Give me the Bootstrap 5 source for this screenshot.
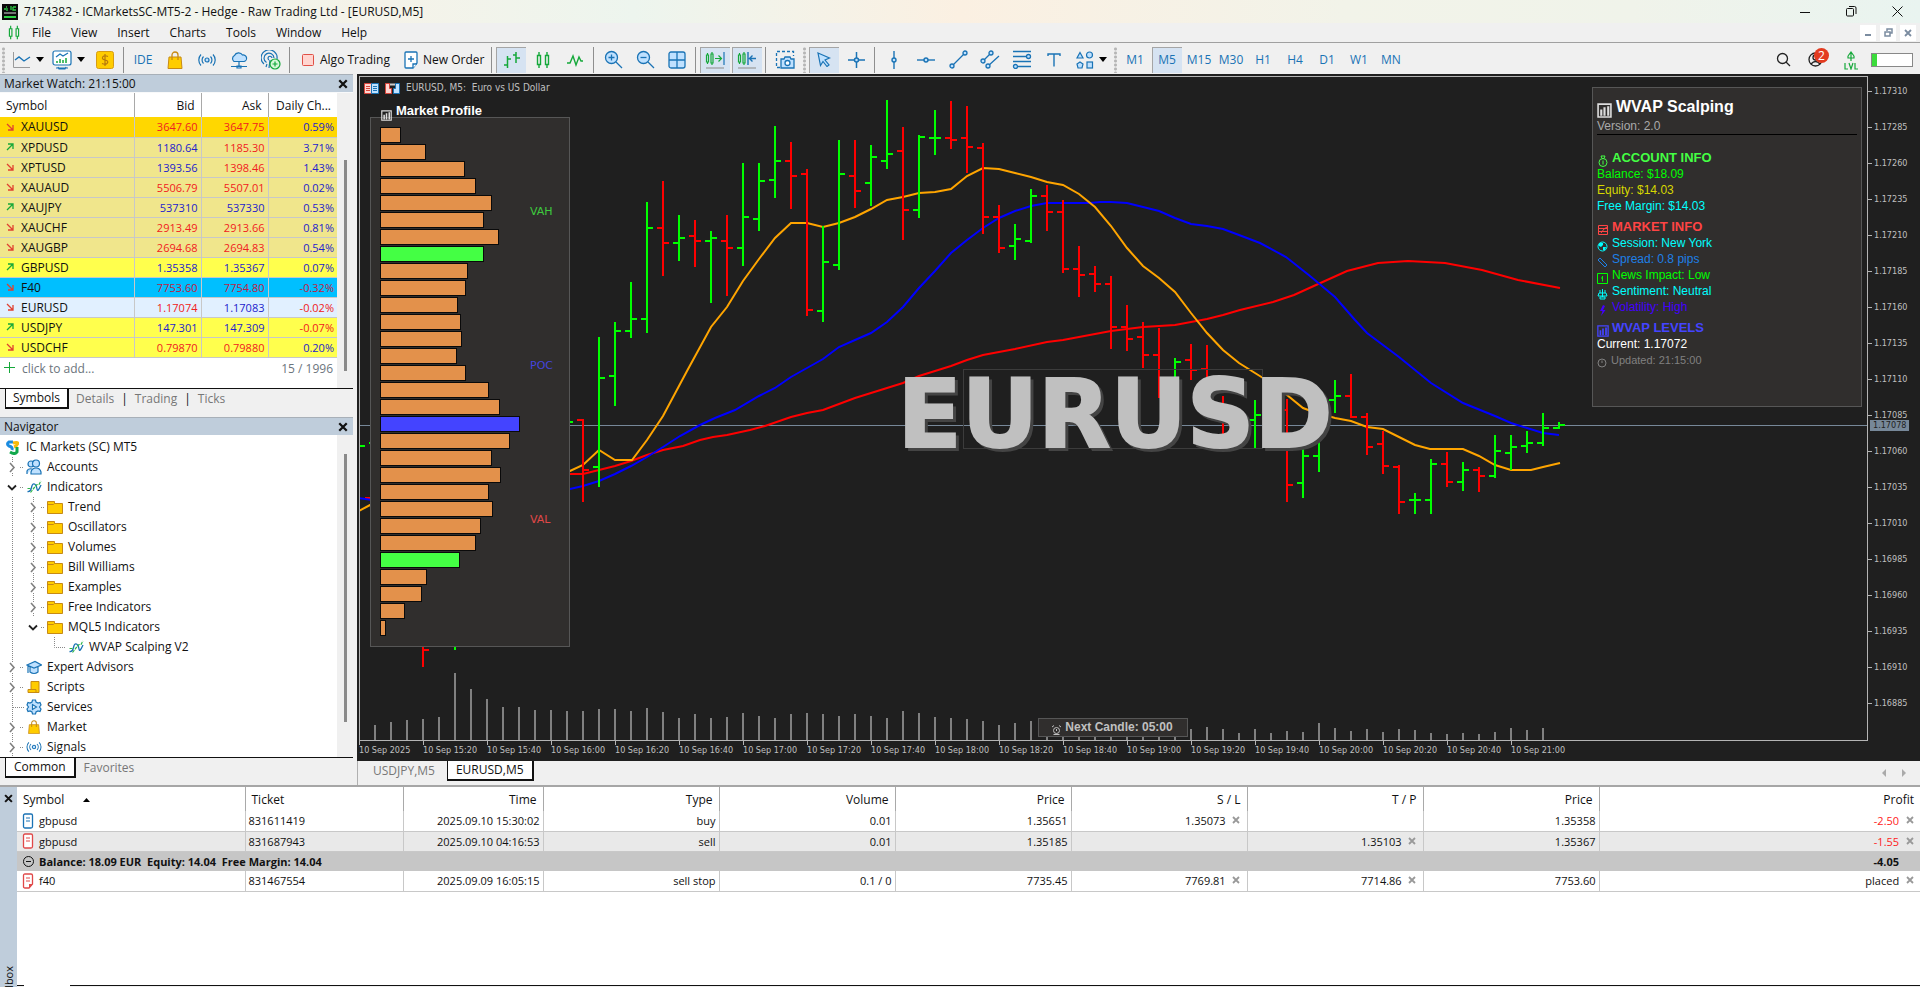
<!DOCTYPE html>
<html lang="en">
<head>
<meta charset="utf-8">
<meta name="viewport" content="width=device-width, initial-scale=1">
<title>7174382 - ICMarketsSC-MT5-2 - Hedge - Raw Trading Ltd - [EURUSD,M5]</title>
<link href="https://cdn.jsdelivr.net/npm/bootstrap@5.3.0/dist/css/bootstrap.min.css" rel="stylesheet">
<style>
  :root { --ui: "Open Sans", "Noto Sans", sans-serif; --arial: "Liberation Sans", Arial, sans-serif; --blue: #1a73b5; --strip: #bfcddb; }
  body { font: 12px/20px var(--ui); color: #111; background: #f0f0f0; height: 100vh; overflow: hidden; }
  button { border: 0; background: none; padding: 0; color: inherit; font: inherit; }
  svg { display: block; flex: none; }
  .titlebar { height: 23px; padding-left: 2px; gap: 6px; background: linear-gradient(90deg, #eef5ee 0, #f5f3e9 20%, #edf5ee 33%, #fbf0e2 50%, #f2f3e9 70%, #f0f3ea 85%, #e9f4f0 100%); }
  .win-btn { width: 46px; height: 20px; display: grid; place-items: center; }
  .menubar { height: 20px; border-bottom: 1px solid #a0a0a0; }
  .menubar button { line-height: 19px; }
  .menu-items { gap: 20px; }
  .mdi-btn { width: 16px; height: 16px; background: #fff; display: grid; place-items: center; }
  .toolbar { height: 31px; padding-top: 2px; }
  .grip { width: 7px; height: 26px; flex: none; background: radial-gradient(circle, #b5b5b5 1px, transparent 2px) 0 0/7px 4px; }
  .vsep { width: 6px; flex: none; }
  .vsep::before { content: ""; display: block; height: 26px; margin-left: 2px; width: 1px; background: #8e8e8e; }
  .tool { width: 30px; height: 26px; margin: 0 1px; flex: none; display: grid; place-items: center; color: var(--blue); white-space: nowrap; }
  .tool.on { background: #d6e3f2; box-shadow: inset 1px 1px #a5a5a5; }
  .tool-wide { height: 26px; flex: none; display: flex; align-items: center; white-space: nowrap; }
  .caret { width: 0; border: 4px solid transparent; border-top: 5px solid #000; border-bottom: 0; }
  .left { width: 353px; flex: none; }
  .pane-head { height: 18px; line-height: 17px; background: var(--strip); padding: 0 4px; border-top: 1px solid #a8b0b8; }
  .close-x { font-size: 0; width: 13px; height: 17px; display: grid; place-items: center; }
  .scroller { width: 16px; flex: none; background: #f0f0f0; }
  .scroller i { display: block; width: 3px; margin-left: 7px; background: #8a8a8a; }
  .grid-table { width: 100%; table-layout: fixed; border-collapse: collapse; }
  .grid-table th { font-weight: 400; height: 24px; line-height: 23px; padding: 0 6px; background: #fff; white-space: nowrap; }
  .grid-table td { height: 20px; line-height: 19px; padding: 0 3px; border-bottom: 1px solid #c8c8c8; white-space: nowrap; }
  .grid-table th + th { border-left: 1px solid #a9a9a9; }
  .grid-table td + td { border-left: 1px solid #c8c8c8; }
  .grid-table .num { font-size: 11px; }
  .tabs { height: 29px; border-top: 1px solid #111; padding-left: 5px; }
  .tabs button { padding: 0 7px; }
  .tabs button, .chart-tabs button { height: 20px; line-height: 18px; color: #777; }
  .tabs button.on, .chart-tabs button.on { background: #fff; color: #111; border: 1px solid #111; border-width: 0 2px 2px 1px; }
  .tree { list-style: none; margin: 0; padding: 0; }
  .tree li { display: flex; align-items: center; height: 20px; white-space: nowrap; }
  .chart-win { background: #1f1f1f; padding: 2px 0 0 2px; font: 9px/12px "DejaVu Sans Condensed", "DejaVu Sans", sans-serif; color: #c0c0c0; min-width: 0; }
  .plot { border: 1px solid #b4b4b4; min-width: 0; }
  .price-axis { width: 52px; flex: none; }
  .price-list { margin-top: -3px; }
  .price-list div { height: 36px; display: flex; align-items: center; gap: 2px; }
  .price-list div::before { content: ""; width: 4px; height: 1px; background: #b4b4b4; }
  .price-tag { top: 344px; left: 2px; width: 39px; padding-left: 3px; line-height: 11px; background: #778899; color: #1f1f1f; }
  .time-axis { height: 20px; }
  .time-axis div { width: 64px; flex: none; white-space: nowrap; line-height: 10px; }
  .time-axis div::before { content: ""; display: block; width: 1px; height: 4px; background: #b4b4b4; }
  .chart-tabs { height: 24px; padding-left: 7px; border-left: 1px solid #b0b0b0; }
  .hud { background: #302e2d; border: 1px solid #565656; }
  .profile { left: 10px; top: 40px; width: 200px; height: 530px; padding: 9px 0 0 9px; }
  .profile-title { left: 21px; top: 24px; font: bold 13px/20px var(--arial); color: #fff; gap: 4px; }
  .vol-row { height: 16px; margin-bottom: 1px; border: 1px solid #0a0a0a; background: #e3914b; }
  .vol-row.va { background: #44ff44; }
  .vol-row.poc { background: #4444ff; }
  .lvl { left: 159px; font: 11px/16px "DejaVu Sans", sans-serif; }
  .info { right: 5px; top: 10px; width: 270px; height: 320px; padding: 9px 4px 0 4px; font: 12px/16px var(--arial); }
  .info div { display: flex; align-items: center; gap: 4px; height: 16px; white-space: nowrap; }
  .info svg { margin-top: 6px; }
  .info .info-title { font: bold 16px/20px var(--arial); color: #fff; height: 20px; }
  .info .info-sec { font: bold 13px/16px var(--arial); height: 16px; gap: 3px; }
  .info hr { margin: 0; border: 0; height: 1px; background: #000; opacity: 1; }
  .next { left: 50%; margin-left: -76px; bottom: 3px; width: 150px; height: 19px; font: bold 12px/17px var(--arial); color: #c0c0c0; gap: 4px; }
  .toolbox { height: 202px; border-top: 2px solid #a6a6a6; }
  .tb-strip { width: 17px; background: var(--strip); flex: none; }
  .tb-close { padding-top: 7px; }
  .tb-name { height: 21px; overflow: hidden; }
  .tb-name span { writing-mode: vertical-rl; transform: rotate(180deg); line-height: 17px; font-size: 11px; }
  .toolbox td { font-size: 11px; }
  .toolbox .alt td { background: #e9e9e9; }
  .toolbox .sum td { background: #c6c6c6; font-weight: 700; border: 0; }
  .bottom-tabs { height: 2px; }
  .bottom-tabs i { border-top: 1px solid #111; background: #f0f0f0; }
  .x { width: 15px; height: 18px; vertical-align: top; color: #999; display: inline-grid; place-items: center; }
</style>
</head>
<body class="d-flex flex-column">

<svg width="0" height="0" class="position-absolute">
  <defs>
    <symbol id="folder" viewBox="0 0 16 16"><path d="M.5 2.5v12h15v-10h-8v-2z" fill="#fc0" stroke="#c78a15"/><path d="M1 5.5h5.500l1-1" fill="none" stroke="#c78a15"/></symbol>
    <symbol id="ind" viewBox="0 0 16 16"><path d="M1.500 12.500q3 .5 4-4T8.500 5t2.500 5 4-4" fill="none" stroke="#1a73b5" stroke-width="1.300"/><path d="M1.500 9.500h3M4.500 13.500L8 9l3-3.500h2L15 2" fill="none" stroke="#2db54a" stroke-width="1.200" stroke-dasharray="3 1"/></symbol>
    <symbol id="bag" viewBox="0 0 16 18"><path d="M2 6h12l1 11.500H1z" fill="#fc0" stroke="#c78a15"/><path d="M5 9V4a3 3 0 0 1 6 0v5" fill="none" stroke="#c78a15" stroke-width="1.300"/></symbol>
    <symbol id="sig" viewBox="0 0 18 14" fill="none" stroke="#1a73b5" stroke-width="1.200"><circle cx="9" cy="7" r="2" fill="#bfe1ff"/><path d="M5.500 3.500a5 5 0 0 0 0 7M12.500 3.500a5 5 0 0 1 0 7M3 1.500a8 8 0 0 0 0 11M15 1.500a8 8 0 0 1 0 11"/></symbol>
    <symbol id="chart" viewBox="0 0 14 14"><path d="M1 1h12v12H1z" fill="none" stroke="currentColor" stroke-width="1.500"/><path d="M3 6h2v6H3zM6 4h2v8H6zM9.500 3h2v9h-2z" fill="currentColor"/></symbol>
    <symbol id="xx" viewBox="0 0 8 8"><path d="M1 1l6 6M7 1L1 7" stroke="currentColor" stroke-width="1.800"/></symbol>
    <symbol id="node" viewBox="0 0 26 20"><path d="M12.500 0v5M12.500 16v4M20 10.500h4" stroke="#888" stroke-dasharray="1 1"/><path d="M10 6l4 4.500-4 4.500" fill="none" stroke="#808080" stroke-width="1.600"/></symbol>
    <symbol id="open" viewBox="0 0 26 20"><path d="M20 10.500h4" stroke="#888" stroke-dasharray="1 1"/><path d="M8 8.500l4 4 4-4" fill="none" stroke="#222" stroke-width="1.800"/></symbol>
    <symbol id="leafn" viewBox="0 0 26 20"><path d="M12.500 0v20M13 10.500h11" stroke="#888" stroke-dasharray="1 1"/></symbol>
    <symbol id="elbow" viewBox="0 0 26 20"><path d="M12.500 0v10.500H24" fill="none" stroke="#888" stroke-dasharray="1 1"/></symbol>
    <symbol id="vline" viewBox="0 0 21 20"><path d="M12.500 0v20" stroke="#888" stroke-dasharray="1 1"/></symbol>
    <symbol id="bars" viewBox="0 0 14 18" fill="none" stroke="#15a83a" stroke-width="1.400"><path d="M1.500 4.500h3v9h-3zM9.500 4.500h3v9h-3zM3 1v3M3 14v3M11 1v3M11 14v3"/></symbol>
    <symbol id="doc" viewBox="0 0 12 16"><rect x="1.500" y="1" width="9" height="14" rx="1.500" fill="#fff" stroke="currentColor" stroke-width="1.300"/><path d="M4 5h4M4 8h4" stroke="currentColor"/></symbol>
    <symbol id="pend" viewBox="0 0 12 16"><path d="M1.500 2.500q0-1.500 1.500-1.500h6q1.500 0 1.500 1.500V11L7 15H3q-1.500 0-1.500-1.500z" fill="#fff" stroke="currentColor" stroke-width="1.300"/><path d="M4 5h4M4 8h4" stroke="currentColor"/><path d="M10.500 11H7v4z" fill="currentColor"/></symbol>
  </defs>
</svg>

<header class="titlebar d-flex align-items-center flex-shrink-0">
  <svg width="16" height="16"><rect width="16" height="16" fill="#0b0b0b"/><path d="M2 5h2M4 3h1M5 4v3M9 2v4M11 3h3M11 3v3h3" stroke="#2fd046" stroke-width="1.300" fill="none"/><path d="M2 9h12" stroke="#ddd"/><path d="M2 13h12" stroke="#2fd046" stroke-width="2"/></svg>
  <span>7174382 - ICMarketsSC-MT5-2 - Hedge - Raw Trading Ltd - [EURUSD,M5]</span>
  <div class="ms-auto d-flex align-items-center">
    <button class="win-btn" aria-label="Minimize"><svg width="10" height="10"><path d="M0 5.500h10" stroke="#111"/></svg></button>
    <button class="win-btn" aria-label="Restore"><svg width="11" height="11" fill="none" stroke="#111"><rect x=".5" y="2.500" width="7" height="7.500" rx="1"/><path d="M3 .5h5.500q1.500 0 1.500 1.500V8"/></svg></button>
    <button class="win-btn" aria-label="Close"><svg width="11" height="11"><path d="M.5 .5l10 10M10.500 .5l-10 10" stroke="#111"/></svg></button>
  </div>
</header>

<nav class="menubar d-flex align-items-center flex-shrink-0">
  <svg class="ms-2" width="12" height="15"><use href="#bars"/></svg>
  <div class="menu-items d-flex ms-2 ps-1">
    <button>File</button><button>View</button><button>Insert</button><button>Charts</button><button>Tools</button><button>Window</button><button>Help</button>
  </div>
  <div class="ms-auto d-flex gap-1 pe-1">
    <button class="mdi-btn" aria-label="Minimize chart"><svg width="8" height="8"><path d="M1 6h6" stroke="#7b8ca0" stroke-width="2"/></svg></button>
    <button class="mdi-btn" aria-label="Restore chart"><svg width="9" height="9" fill="none" stroke="#7b8ca0" stroke-width="1.500"><path d="M1 4h5v4H1zM3 3V1h5v4H6.500"/></svg></button>
    <button class="mdi-btn" aria-label="Close chart"><svg width="8" height="8" color="#7b8ca0"><use href="#xx"/></svg></button>
  </div>
</nav>

<div class="toolbar d-flex align-items-center flex-shrink-0">
  <span class="grip"></span>
  <button class="tool-wide" style="width:40px;padding-left:5px;gap:5px" aria-label="Chart list"><svg width="19" height="18" fill="none"><path d="M1.500 1v15.500H18" stroke="#9a9a9a"/><path d="M3 9l4-3 5 4 6-4" stroke="#1a73b5" stroke-width="1.400"/></svg><span class="caret"></span></button>
  <button class="tool-wide" style="width:42px;padding-left:5px;gap:5px" aria-label="Template"><svg width="20" height="20" fill="none" stroke="#1a73b5" stroke-width="1.200"><rect x="1" y="1" width="18" height="14" rx="2" fill="#fff"/><path d="M4 7l4-3 3 2 5-3M4 18h12M6 17l1 2h6l1-2"/><path d="M5 13v-2M8 13V9M11 13v-3M14 13V8" stroke="#15a83a" stroke-width="1.500"/></svg><span class="caret"></span></button>
  <button class="tool" aria-label="Payments"><svg width="18" height="18"><rect x=".5" y=".5" width="17" height="17" rx="2" fill="#fc0" stroke="#d79d12"/><path d="M12 5.500q-3-1.500-5 0c-1.500 2 0 3 2 3.500s4 1.500 2 3.500q-2 1.500-5 0M9 3v12" fill="none" stroke="#b5770f" stroke-width="1.200"/></svg></button>
  <span class="vsep"></span>
  <button class="tool">IDE</button>
  <button class="tool" aria-label="Market"><svg width="16" height="18"><use href="#bag"/></svg></button>
  <button class="tool" aria-label="Signals"><svg width="18" height="14"><use href="#sig"/></svg></button>
  <button class="tool" aria-label="VPS"><svg width="18" height="18" stroke="#1a73b5" stroke-width="1.200"><path d="M4 10.500a3.500 3.500 0 0 1 .5-6 4.500 4.500 0 0 1 8-.5 3.300 3.300 0 0 1 1.500 6.500z" fill="#bfe1ff"/><path d="M9 11v4M1 15.500h16M7 15h4v2H7z" fill="#bfe1ff"/></svg></button>
  <button class="tool" aria-label="Add"><svg width="20" height="20" fill="none" stroke="#1a73b5" stroke-width="1.200"><path d="M3 14a8 8 0 1 1 13-5M5.500 12.500a5 5 0 1 1 7.500-4.500M8 10a2 2 0 1 1 3-2"/><path d="M9 10l-1 8M5 17l1-3"/><circle cx="14" cy="14" r="5" fill="#d8f7d8" stroke="#15a83a"/><path d="M14 11.500v5M11.500 14h5" stroke="#15a83a"/></svg></button>
  <span class="vsep"></span>
  <button class="tool-wide" style="width:102px;padding-left:9px;gap:6px"><svg width="12" height="12"><rect x=".5" y=".5" width="11" height="11" rx="1" fill="#ffd5d0" stroke="#e05046"/></svg>Algo Trading</button>
  <button class="tool-wide" style="width:94px;padding-left:9px;gap:5px"><svg width="14" height="18" fill="#fff" stroke="#1a73b5" stroke-width="1.300"><path d="M1 2q0-1 1-1h10q1 0 1 1v10l-4 5H2q-1 0-1-1z"/><path d="M7 5v6M4 8h6M9 17v-4h4"/></svg>New Order</button>
  <span class="vsep"></span>
  <button class="tool on" aria-label="Bar chart"><svg width="17" height="18" fill="none" stroke="#15a83a" stroke-width="1.500"><path d="M4.500 5v12M1 14h3.500M4.500 8H8M13 1v11M10 4h3M13 7h4"/></svg></button>
  <button class="tool" aria-label="Candlesticks"><svg width="14" height="18"><use href="#bars"/></svg></button>
  <button class="tool" aria-label="Line chart"><svg width="18" height="14"><path d="M1 10h3l3-7 3 9 3-8 2 4h2" fill="none" stroke="#15a83a" stroke-width="1.400"/></svg></button>
  <span class="vsep"></span>
  <button class="tool" aria-label="Zoom in"><svg width="19" height="19" fill="#bfe1ff" stroke="#1a73b5" stroke-width="1.300"><path d="M12 12l6 6"/><circle cx="7.500" cy="7.500" r="6"/><path d="M4.500 7.500h6M7.500 4.500v6"/></svg></button>
  <button class="tool" aria-label="Zoom out"><svg width="19" height="19" fill="#bfe1ff" stroke="#1a73b5" stroke-width="1.300"><path d="M12 12l6 6"/><circle cx="7.500" cy="7.500" r="6"/><path d="M4.500 7.500h6"/></svg></button>
  <button class="tool" aria-label="Tile windows"><svg width="18" height="18" fill="#bfe1ff" stroke="#1a73b5" stroke-width="1.300"><rect x="1" y="1" width="16" height="16" rx="2"/><path d="M9 1v16M1 9h16"/></svg></button>
  <span class="vsep"></span>
  <button class="tool on" aria-label="Auto scroll"><svg width="20" height="20" fill="none" stroke="#15a83a" stroke-width="1.200"><path d="M1.500 5v7h2V5zM6 4v9h2V4zM2.500 3v2M2.500 12v2M7 2v2M7 13v2M10 8.500h6M13.500 5.500l3 3-3 3"/><path d="M19 2v13" stroke="#1a73b5"/><path d="M1 18h18" stroke="#999"/></svg></button>
  <button class="tool on" aria-label="Chart shift"><svg width="20" height="20" fill="none" stroke="#15a83a" stroke-width="1.200"><path d="M1.500 5v7h2V5zM6 4v9h2V4zM2.500 3v2M2.500 12v2M7 2v2M7 13v2"/><path d="M11 2v13M19 8.500h-6M15.500 5.500l-3 3 3 3" stroke="#1a73b5" stroke-width="1.400"/><path d="M1 18h18" stroke="#999"/></svg></button>
  <span class="vsep"></span>
  <button class="tool" aria-label="Screenshot"><svg width="20" height="20" fill="none" stroke="#1a73b5" stroke-width="1.300"><path d="M5 17.500H1.500v-16h17V6" stroke-dasharray="3 2"/><path d="M6 9h3l1-2h5l1 2h3v9H6z" fill="#bfe1ff"/><circle cx="12.500" cy="13" r="2.500" fill="#fff"/></svg></button>
  <span class="grip"></span>
  <button class="tool on" aria-label="Cursor"><svg width="14" height="15"><path d="M1 1l11.500 5-4.500 2 4 5-2 1.500-4-5-2.500 4z" fill="#bfe1ff" stroke="#1a73b5" stroke-width="1.200"/></svg></button>
  <button class="tool" aria-label="Crosshair"><svg width="17" height="18" stroke="#1a73b5" stroke-width="1.500" fill="#bfe1ff"><path d="M8.500 1v16M0 9h17"/><circle cx="8.500" cy="9" r="2"/></svg></button>
  <span class="vsep"></span>
  <button class="tool" aria-label="Vertical line"><svg width="8" height="18" stroke="#1a73b5" stroke-width="1.400" fill="#bfe1ff"><path d="M4 0v18"/><circle cx="4" cy="9" r="2"/></svg></button>
  <button class="tool" aria-label="Horizontal line"><svg width="18" height="8" stroke="#1a73b5" stroke-width="1.400" fill="#bfe1ff"><path d="M0 4h18"/><circle cx="9" cy="4" r="2"/></svg></button>
  <button class="tool" aria-label="Trendline"><svg width="19" height="19" stroke="#1a73b5" stroke-width="1.300" fill="#bfe1ff"><path d="M3 16L16 3"/><circle cx="3" cy="16" r="2"/><circle cx="16" cy="3" r="2"/></svg></button>
  <button class="tool" aria-label="Channel"><svg width="20" height="19" stroke="#1a73b5" stroke-width="1.300" fill="#bfe1ff"><path d="M3 11l8-8M8 16L19 6"/><circle cx="3" cy="11" r="2"/><circle cx="11" cy="3" r="2"/><circle cx="8" cy="16" r="2"/></svg></button>
  <button class="tool" aria-label="Fibonacci"><svg width="20" height="19" stroke="#1a73b5" stroke-width="1.300" fill="#bfe1ff"><path d="M1 1.500h18M1 6.500h18M1 11.500h18M1 16.500h18"/><circle cx="16.500" cy="6.500" r="2"/><circle cx="3.500" cy="16.500" r="2"/></svg></button>
  <button class="tool" aria-label="Text"><svg width="14" height="14"><path d="M1 3V1h12v2M7 1v12.500" fill="none" stroke="#1a73b5" stroke-width="1.400"/></svg></button>
  <button class="tool-wide" style="width:42px;padding-left:6px;gap:5px" aria-label="Objects"><svg width="18" height="18" stroke="#1a73b5" stroke-width="1.200" fill="#bfe1ff"><path d="M4 1.500L7 7H1z"/><circle cx="13.500" cy="4" r="3"/><path d="M4 11l3 2-1 4H2l-1-4z"/><rect x="11" y="11" width="5.500" height="6"/></svg><span class="caret"></span></button>
  <span class="grip"></span>
  <button class="tool">M1</button><button class="tool on">M5</button><button class="tool">M15</button><button class="tool">M30</button><button class="tool">H1</button><button class="tool">H4</button><button class="tool">D1</button><button class="tool">W1</button><button class="tool">MN</button>
  <div class="ms-auto d-flex align-items-center" style="padding-right:7px">
    <button class="tool" aria-label="Search"><svg width="15" height="15" fill="none" stroke="#222" stroke-width="1.300"><circle cx="6.500" cy="6.500" r="5"/><path d="M10 10l4 4"/></svg></button>
    <button class="tool position-relative" aria-label="Account, 2 notifications"><svg width="15" height="15" fill="none" stroke="#222" stroke-width="1.300"><circle cx="7.500" cy="7.500" r="6.500"/><circle cx="7.500" cy="5.500" r="2.500"/><path d="M3 12q4.500-5 9 0"/></svg><span class="position-absolute rounded-circle text-white text-center" style="background:#e33b20;width:15px;height:15px;line-height:15px;left:14px;top:1px">2</span></button>
    <button class="tool" style="width:38px" aria-label="Level"><svg width="14" height="20" fill="none" stroke="#15a83a" stroke-width="1.200"><path d="M7 11V3M4 6l3-4 3 4M4 6v2h6V6"/><path d="M1 13v6h3M5 13l2 6 2-6M11 13v6h3"/></svg></button>
    <div class="d-flex bg-white" style="width:42px;height:14px;border:1px solid #888"><span style="width:5px;background:#3bdc3b"></span></div>
  </div>
</div>

<main class="d-flex flex-grow-1" style="min-height:0">
  <aside class="left d-flex flex-column me-1">
    <section>
      <div class="pane-head d-flex justify-content-between">Market Watch: 21:15:00<button class="close-x" aria-label="Close Market Watch"><svg width="10" height="10"><use href="#xx"/></svg></button></div>
      <div class="d-flex bg-white border-top border-light" style="height:296px">
        <div class="flex-grow-1">
          <table class="grid-table">
            <colgroup><col><col style="width:67px"><col style="width:67px"><col style="width:69px"></colgroup>
            <thead><tr><th>Symbol</th><th class="text-end">Bid</th><th class="text-end">Ask</th><th class="text-end">Daily Ch...</th></tr></thead>
            <tbody id="quotes"></tbody>
          </table>
          <div class="d-flex text-secondary pe-1" style="padding-left:4px;line-height:21px"><svg class="mt-1" style="margin-right:7px" width="11" height="11"><path d="M5.500 0v11M0 5.500h11" stroke="#15a83a"/></svg>click to add...<span class="ms-auto">15 / 1996</span></div>
        </div>
        <div class="scroller" style="padding-top:67px"><i style="height:211px"></i></div>
      </div>
      <div class="tabs d-flex"><button class="on">Symbols</button><button>Details</button><span>|</span><button>Trading</button><span>|</span><button>Ticks</button></div>
    </section>
    <section class="d-flex flex-column flex-grow-1" style="min-height:0">
      <div class="pane-head d-flex justify-content-between flex-shrink-0">Navigator<button class="close-x" aria-label="Close Navigator"><svg width="10" height="10"><use href="#xx"/></svg></button></div>
      <div class="d-flex bg-white flex-grow-1 overflow-hidden">
        <ul class="tree flex-grow-1" id="tree" style="padding-top:2px"></ul>
        <div class="scroller" style="padding-top:19px"><i style="height:268px"></i></div>
      </div>
      <div class="tabs d-flex flex-shrink-0" style="height:28px"><button class="on px-2">Common</button><button class="px-2">Favorites</button></div>
    </section>
  </aside>

  <div class="d-flex flex-column flex-grow-1" style="min-width:0">
    <section class="chart-win d-flex flex-column flex-grow-1">
      <div class="d-flex flex-grow-1">
        <div class="plot position-relative flex-grow-1 overflow-hidden">
          <svg id="chart-svg" class="position-absolute" width="100%" height="100%"></svg>
          <div class="position-absolute d-flex align-items-center" style="left:4px;top:5px;gap:6px">
            <svg width="15" height="11"><path d="M.5 .5h7v10h-7z" fill="#ffd5d0" stroke="#d8453b"/><path d="M7.500 .5h7v10h-7z" fill="#bfe1ff" stroke="#1a73b5"/><path d="M2 3.500h4M2 5.500h4M2 7.500h4" stroke="#d8453b"/><path d="M9 3.500h4M9 5.500h4M9 7.500h4" stroke="#1a73b5"/></svg>
            <svg width="15" height="11"><path d="M.5 .5h4v5h2v5h-6z" fill="#ffd5d0" stroke="#d8453b"/><path d="M14.500 .5h-4v5h-2v5h6z" fill="#bfe1ff" stroke="#1a73b5"/><path d="M5 1.500h5" stroke="#ccc" stroke-width="2"/></svg>
            <span style="font-size:10px">EURUSD, M5: &nbsp;Euro vs US Dollar</span>
          </div>
          <div class="hud profile position-absolute"><div id="profile"></div>
            <span class="lvl position-absolute" style="top:86px;color:#3ecb3e">VAH</span>
            <span class="lvl position-absolute" style="top:240px;color:#4444dd">POC</span>
            <span class="lvl position-absolute" style="top:394px;color:#e04848">VAL</span>
          </div>
          <div class="profile-title position-absolute d-flex align-items-center"><svg class="mt-2" width="11" height="11" color="#ddd"><use href="#chart"/></svg>Market Profile</div>
          <div class="hud info position-absolute">
            <div class="info-title"><svg width="15" height="15" color="#ddd"><use href="#chart"/></svg>WVAP Scalping</div>
            <div style="color:#aaa;height:17px">Version: 2.0</div>
            <hr>
            <div class="info-sec" style="color:#44ff44;margin-top:15px"><svg width="12" height="12" fill="none" stroke="currentColor"><circle cx="6" cy="7.500" r="4"/><path d="M4 1h4L7 3.500H5zM6 5.500v4"/></svg>ACCOUNT INFO</div>
            <div style="color:#00ff00">Balance: $18.09</div>
            <div style="color:#d7d700">Equity: $14.03</div>
            <div style="color:#00ffff">Free Margin: $14.03</div>
            <div class="info-sec" style="color:#ff4444;margin-top:5px"><svg width="12" height="12" fill="none" stroke="currentColor"><path d="M1.500 1.500h9v9h-9zM1.500 4.500h9M1.500 7.500h9M4 9l3-4 3-2"/></svg>MARKET INFO</div>
            <div style="color:#00ffff"><svg width="11" height="11"><circle cx="5.500" cy="5.500" r="4.500" fill="none" stroke="currentColor"/><path d="M2 2h4v2L4 6 2 5zM6 6h3l-1 3H6z" fill="currentColor"/></svg>Session: New York</div>
            <div style="color:#1e80e8"><svg width="11" height="11"><path d="M3 1l7 7-2 2-7-7z" fill="none" stroke="currentColor"/></svg>Spread: 0.8 pips</div>
            <div style="color:#00ff00"><svg width="11" height="11"><path d="M.5 .5h10v10H.5zM5.500 3v5.500M4 5h1.500" fill="none" stroke="currentColor"/></svg>News Impact: Low</div>
            <div style="color:#00ffff"><svg width="11" height="11" stroke="currentColor" fill="none"><path d="M2 4h7l1 3H1zM3 8h5v2H3zM5.500 0v8M3 1v3M8 1v3"/></svg>Sentiment: Neutral</div>
            <div style="color:#4400ff"><svg width="11" height="11"><path d="M6 0L3 6h2.500L4 11l4.500-6H6l2-4z" fill="currentColor"/></svg>Volatility: High</div>
            <div class="info-sec" style="color:#4444ff;margin-top:5px"><svg width="12" height="12"><use href="#chart"/></svg>WVAP LEVELS</div>
            <div class="text-white">Current: 1.17072</div>
            <div style="color:#808080;font-size:11px"><svg width="10" height="10" fill="none" stroke="currentColor"><circle cx="5" cy="5" r="4"/><path d="M5 2.500V5"/></svg>Updated: 21:15:00</div>
          </div>
          <div class="hud next position-absolute d-flex align-items-center justify-content-center"><svg class="mt-1" width="9" height="10" fill="none" stroke="currentColor"><circle cx="4.500" cy="5.500" r="3"/><path d="M0 2l2-1.500M9 2L7 .5M1.500 9.500h6M4.500 4v2"/></svg>Next Candle: 05:00</div>
        </div>
        <div class="price-axis position-relative"><div class="price-list" id="prices"></div><div class="price-tag position-absolute">1.17078</div></div>
      </div>
      <div class="time-axis d-flex overflow-hidden" id="times"></div>
    </section>
    <div class="chart-tabs d-flex flex-shrink-0"><button class="px-2">USDJPY,M5</button><button class="on px-2 ms-1">EURUSD,M5</button>
      <div class="ms-auto d-flex align-items-center" style="gap:16px;padding-right:14px"><svg width="4" height="8"><path d="M4 0v8L0 4z" fill="#aaa"/></svg><svg width="4" height="8"><path d="M0 0v8l4-4z" fill="#aaa"/></svg></div></div>
  </div>
</main>

<section class="toolbox d-flex flex-shrink-0 bg-white">
  <div class="tb-strip d-flex flex-column justify-content-between"><button class="tb-close w-100 d-flex justify-content-center" aria-label="Close Toolbox"><svg width="9" height="9"><use href="#xx"/></svg></button><div class="tb-name"><span>Toolbox</span></div></div>
  <div class="flex-grow-1 d-flex flex-column" style="min-width:0">
    <table class="grid-table" id="trades">
      <colgroup><col style="width:228px"><col style="width:158px"><col style="width:140px"><col style="width:176px"><col style="width:176px"><col style="width:176px"><col style="width:176px"><col style="width:176px"><col style="width:176px"><col></colgroup>
      <thead><tr><th>Symbol <svg class="d-inline ms-3" width="7" height="4"><path d="M0 4h7L3.500 0z"/></svg></th><th>Ticket</th><th class="text-end">Time</th><th class="text-end">Type</th><th class="text-end">Volume</th><th class="text-end">Price</th><th class="text-end">S / L</th><th class="text-end">T / P</th><th class="text-end">Price</th><th class="text-end">Profit</th></tr></thead>
      <tbody></tbody>
    </table>
    <div class="mt-auto bottom-tabs d-flex justify-content-between"><i style="width:7px"></i><i class="flex-grow-1" style="margin-left:46px"></i></div>
  </div>
</section>

<script src="https://cdn.jsdelivr.net/npm/bootstrap@5.3.0/dist/js/bootstrap.bundle.min.js"></script>
<script>
const $ = s => document.querySelector(s);
const R = '#f02020', B = '#2222cc';

// Market Watch: symbol, direction, bid, ask, change, row colour, bid/ask/change text colours
const quotes = [
  ['XAUUSD','d','3647.60','3647.75','0.59%','#ffd700',R,R,B],['XPDUSD','u','1180.64','1185.30','3.71%','#f0e68c',B,R,B],
  ['XPTUSD','d','1393.56','1398.46','1.43%','#f0e68c',B,R,B],['XAUAUD','d','5506.79','5507.01','0.02%','#f0e68c',R,R,B],
  ['XAUJPY','u','537310','537330','0.53%','#f0e68c',B,B,B],['XAUCHF','d','2913.49','2913.66','0.81%','#f0e68c',R,R,B],
  ['XAUGBP','d','2694.68','2694.83','0.54%','#f0e68c',R,R,B],['GBPUSD','u','1.35358','1.35367','0.07%','#ffff4d',B,B,B],
  ['F40','d','7753.60','7754.80','-0.32%','#00bfff','#c02040','#c02040','#c02040'],['EURUSD','d','1.17074','1.17083','-0.02%','#e1f0ff',R,B,R],
  ['USDJPY','u','147.301','147.309','-0.07%','#ffff4d',B,B,R],['USDCHF','d','0.79870','0.79880','0.20%','#ffff4d',R,R,B]];
$('#quotes').innerHTML = quotes.map(q => {
  const arrow = q[1] === 'u' ? '<path d="M1 7L7 1M2 1h5v5" stroke="#18a838"/>' : '<path d="M1 1l6 6M7 2v5H2" stroke="#e04030"/>';
  return `<tr style="background:${q[5]}"><td><span class="d-flex align-items-center" style="gap:7px;padding-left:3px"><svg width="8" height="8" fill="none" stroke-width="1.3">${arrow}</svg><span>${q[0]}</span></span></td>` +
    [2,3,4].map(i => `<td class="num text-end" style="color:${q[i+4]}">${q[i]}</td>`).join('') + '</tr>';
}).join('');

// Navigator: depth, expander, icon, label
const icons = {
  acc: '<svg width="16" height="16" fill="#bfe1ff" stroke="#1a73b5" stroke-width="1.2"><circle cx="5" cy="5" r="3"/><path d="M1 15v-3q1-3 5-2"/><circle cx="10" cy="4.500" r="3.500"/><path d="M5 15v-2q1-4 5-4t5 4v2z"/></svg>',
  ind: '<svg width="16" height="16"><use href="#ind"/></svg>', folder: '<svg width="16" height="16"><use href="#folder"/></svg>',
  cap: '<svg width="16" height="16" fill="#bfe1ff" stroke="#1a73b5" stroke-width="1.2"><path d="M4 8v5q4 3 8 0V8M1 6l8-3.500L15.500 6 8 9zM2 6v8"/></svg>',
  script: '<svg width="16" height="16"><path d="M5 2.500h8v11H2v-3h3z" fill="#fc0" stroke="#c78a15"/><path d="M2 10.500h8v3" fill="none" stroke="#c78a15"/></svg>',
  gear: '<svg width="16" height="16" fill="#bfe1ff" stroke="#1a73b5" stroke-width="1.2"><path d="M6.500 1h3l.5 2 2 1 2-.5 1 2.500-1.500 2 1.500 2-1 2.500-2-.5-2 1-.5 2h-3L6 13l-2-1-2 .5L1 10l1.500-2L1 6l1-2.500L4 4l2-1z"/><path d="M6.500 5.500v5l4-2.500z" fill="#fff"/></svg>',
  bag: '<svg width="14" height="14" style="margin:1px"><use href="#bag"/></svg>', sig: '<svg width="16" height="12"><use href="#sig"/></svg>'};
const nodes = [[0,'node','acc','Accounts'],[0,'open','ind','Indicators'],[1,'node','folder','Trend'],[1,'node','folder','Oscillators'],
  [1,'node','folder','Volumes'],[1,'node','folder','Bill Williams'],[1,'node','folder','Examples'],[1,'node','folder','Free Indicators'],
  [1,'open','folder','MQL5 Indicators'],[2,'elbow','ind','WVAP Scalping V2'],[0,'node','cap','Expert Advisors'],[0,'node','script','Scripts'],
  [0,'leafn','gear','Services'],[0,'node','bag','Market'],[0,'node','sig','Signals']];
$('#tree').innerHTML = '<li style="padding-left:5px;gap:7px"><svg width="14" height="15" fill="none" stroke-width="3"><path d="M8 2H4Q1 4 4 6q4 1 3 4" stroke="#1a8be0"/><path d="M8 3q4-1 5 0-1 3-4 4" stroke="#f6b90a"/><path d="M5 12q5 3 7 0V7" stroke="#12a84c"/></svg>IC Markets (SC) MT5</li>' +
  nodes.map(n => `<li>${n[0] ? '<svg width="21" height="20"><use href="#vline"/></svg>' : ''}${n[0] > 1 ? '<svg width="21" height="20"></svg>' : ''}<svg width="26" height="20"><use href="#${n[1]}"/></svg>${icons[n[2]]}<span style="padding-left:5px">${n[3]}</span></li>`).join('');

// Volume distribution
const widths = [21,46,85,96,112,104,119,104,88,86,78,81,82,77,86,109,120,140,130,112,121,109,113,101,96,80,47,42,25,6];
$('#profile').innerHTML = widths.map((w, i) => `<div class="vol-row${i === 7 || i === 25 ? ' va' : i === 17 ? ' poc' : ''}" style="width:${w}px"></div>`).join('');

// Axes
$('#prices').innerHTML = Array.from({length: 18}, (_, i) => `<div>${((117310 - 25 * i) / 100000).toFixed(5)}</div>`).join('');
$('#times').innerHTML = '<div>10 Sep 2025</div>' + Array.from({length: 18}, (_, i) => {
  const m = 920 + 20 * i; return `<div>10 Sep ${Math.floor(m / 60)}:${String(m % 60).padStart(2, '0')}</div>`; }).join('');

// Bars: index, open, high, low, close (screen rows)
const bars = [[3,640,600,666,650],[5,640,600,649,610],[12,440,421,450,422],[13,420,420,501,470],[14,467,338,486,378],[15,376,323,405,331],[16,331,283,337,319],[17,319,203,332,228],
[18,228,182,275,243],[19,243,216,260,238],[20,236,221,266,241],[21,241,232,302,238],[22,241,216,295,248],[23,248,164,265,217],[24,219,164,230,181],
[25,180,127,197,161],[26,161,143,208,176],[27,174,170,315,310],[28,311,227,321,262],[29,265,141,269,174],[30,176,141,207,191],[31,183,146,205,157],
[32,161,101,168,154],[33,151,128,239,210],[34,210,136,217,137],[35,138,111,154,138],[36,138,102,148,140],[37,138,107,172,147],[38,148,144,233,217],
[39,217,206,252,248],[40,246,225,259,239],[41,241,190,242,196],[42,196,186,230,212],[43,212,201,272,269],[44,269,247,296,275],[45,274,267,291,284],
[46,284,277,348,327],[47,327,306,350,339],[48,337,323,367,355],[49,355,329,397,394],[50,394,359,396,362],[51,360,345,379,370],[52,369,346,413,412],
[53,412,397,434,434],[55,420,401,447,415],[57,410,400,501,485],[58,483,445,497,456],[59,456,420,471,430],[60,400,381,412,396],[61,396,375,417,417],
[62,417,414,454,447],[63,444,432,473,466],[64,467,466,513,502],[65,500,494,513,500],[66,500,460,513,464],[67,464,453,486,482],[68,482,463,490,470],
[69,470,468,491,476],[70,476,436,477,451],[71,453,436,469,447],[72,446,432,452,443],[73,443,414,445,428],[74,428,423,428,425]];
const vols = [725,722,720,719,717,673,689,699,707,707,710,710,711,711,709,709,711,708,712,718,714,718,717,713,716,718,714,713,714,716,714,716,718,711,713,717,718,
719,721,725,723,721,724,726,726,728,728,730,728,729,730,729,727,729,733,729,733,731,732,723,728,731,729,732,729,730,733,734,733,734,732,728,730,728];
const orange = '359,511 370,505 570,471 583,465 599,450 615,460 632,460 647,440 663,416 687,371 711,327 727,307 743,281 759,259 775,238 791,223 807,223 823,227 839,223 855,217 871,209 887,200 903,197 919,193 935,192 951,189 967,176 983,168 999,169 1015,173 1031,177 1047,182 1063,185 1079,194 1095,207 1111,226 1127,248 1143,266 1159,278 1175,292 1191,313 1207,333 1223,350 1239,363 1255,373 1271,383 1287,395 1303,408 1311,411 1335,418 1351,421 1367,427 1383,429 1399,437 1415,445 1430,449 1463,449 1479,456 1495,465 1511,470 1531,470 1543,467 1560,463';
const blue = '359,498 372,500 570,489 583,486 599,481 615,474 631,466 647,457 663,447 680,436 700,425 715,418 735,410 759,396 775,388 791,377 807,368 823,359 839,347 855,340 871,333 887,322 903,307 919,288 935,271 951,253 967,240 983,228 999,218 1015,211 1031,206 1047,203 1090,203 1100,202 1111,202 1127,203 1143,207 1159,211 1175,218 1191,224 1207,226 1223,229 1239,235 1260,243 1286,257 1310,276 1335,297 1355,320 1367,333 1399,357 1431,383 1463,403 1495,416 1511,423 1527,428 1543,433 1559,435';
const red = '365,498 375,498 570,474 583,474 599,470 615,466 631,461 647,455 663,450 683,446 700,440 713,437 727,435 750,430 765,426 791,417 807,413 823,410 839,404 855,398 887,388 903,383 919,376 935,371 951,366 967,360 983,355 1015,349 1047,342 1063,340 1095,334 1111,331 1127,329 1143,327 1175,325 1207,319 1223,315 1240,310 1273,302 1294,295 1316,285 1347,271 1378,263 1408,261 1445,263 1482,270 1518,280 1560,288';
const bx = k => 375 + 16 * k;
let s = '<g transform="translate(-360,-77)">';
vols.forEach((y, k) => s += `<path d="M${bx(k)} ${y}V740" stroke="#808080" stroke-width="2"/>`);
s += '<path d="M359 425.500H2400" stroke="#778899"/>';
s += '<path d="M359 446h6M369 443h6" stroke="#0f0" stroke-width="2"/>';
for (const [pts, c] of [[red,'#f00'],[blue,'#00f'],[orange,'#ffa500']]) s += `<polyline points="${pts}" fill="none" stroke="${c}" stroke-width="2"/>`;
bars.forEach(([k, o, h, l, c]) => { const x = bx(k), up = c <= o && !(k === 3);
  s += `<path d="M${x - 6} ${o}h6M${x} ${h - 1}V${l + 1}M${x} ${c}h6" fill="none" stroke="${up ? '#0f0' : '#f00'}" stroke-width="2"/>`; });
s += '</g>';
s += `<rect x="603.500" y="292.500" width="299" height="79" fill="none" stroke="#3c3c3c"/>
<g font-family="'DejaVu Sans', sans-serif" font-weight="700" font-size="94" text-anchor="middle" stroke-width="2"><text x="758" y="373" fill="#444" stroke="#444">EURUSD</text><text x="755" y="370" fill="#c0c0c0" stroke="#c0c0c0">EURUSD</text></g>`;
$('#chart-svg').innerHTML = s;

// Open positions and orders
const x = '<button class="x" aria-label="Close"><svg width="8" height="8"><use href="#xx"/></svg></button>';
const row = (cls, color, icon, r) => `<tr class="${cls}"><td><span class="d-flex align-items-center" style="gap:5px;padding-left:2px"><svg width="12" height="16" color="${color}"><use href="#${icon}"/></svg>${r[0]}</span></td><td>${r[1]}</td>` +
  r.slice(2).map(v => `<td class="text-end">${v}</td>`).join('') + '</tr>';
$('#trades tbody').innerHTML =
  row('', '#1a73b5', 'doc', ['gbpusd','831611419','2025.09.10 15:30:02','buy','0.01','1.35651','1.35073 ' + x,'','1.35358','<span style="color:#f22">-2.50</span> ' + x]) +
  row('alt', '#e04848', 'doc', ['gbpusd','831687943','2025.09.10 04:16:53','sell','0.01','1.35185','','1.35103 ' + x,'1.35367','<span style="color:#f22">-1.55</span> ' + x]) +
  '<tr class="sum"><td colspan="9"><span class="d-flex align-items-center" style="gap:5px;padding-left:3px"><svg width="11" height="11" fill="none" stroke="#111"><circle cx="5.500" cy="5.500" r="5"/><path d="M3 5.500h5"/></svg><span>Balance: 18.09 EUR&nbsp; Equity: 14.04&nbsp; Free Margin: 14.04</span></span></td><td class="text-end" style="padding-right:21px">-4.05</td></tr>' +
  row('', '#e04848', 'pend', ['f40','831467554','2025.09.09 16:05:15','sell stop','0.1 / 0','7735.45','7769.81 ' + x,'7714.86 ' + x,'7753.60','placed ' + x]);
</script>
</body>
</html>
